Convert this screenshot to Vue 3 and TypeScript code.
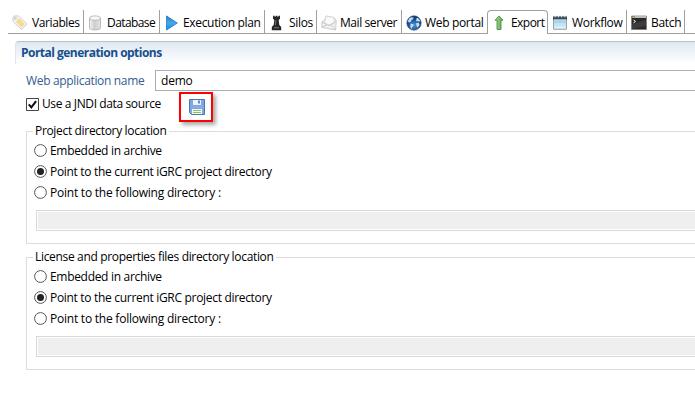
<script setup lang="ts">
import { ref } from 'vue'

interface Tab { id: string; label: string }
interface Group { id: string; title: string; selected: number; path: string }

const tabs: Tab[] = [
  { id: 'variables', label: 'Variables' },
  { id: 'database', label: 'Database' },
  { id: 'execution', label: 'Execution plan' },
  { id: 'silos', label: 'Silos' },
  { id: 'mail', label: 'Mail server' },
  { id: 'web', label: 'Web portal' },
  { id: 'export', label: 'Export' },
  { id: 'workflow', label: 'Workflow' },
  { id: 'batch', label: 'Batch' },
]
const active = ref('export')
const appName = ref('demo')
const useJndi = ref(true)
const options = ['Embedded in archive', 'Point to the current iGRC project directory', 'Point to the following directory :']
const groups = ref<Group[]>([
  { id: 'project', title: 'Project directory location', selected: 1, path: '' },
  { id: 'license', title: 'License and properties files directory location', selected: 1, path: '' },
])
</script>

<template>
  <main class="editor">
    <nav class="tabs">
      <button v-for="t in tabs" :key="t.id" :class="['tab', 'tab-' + t.id, { active: active === t.id }]" @click="active = t.id">
        <svg class="icon" viewBox="0 0 16 16" width="16" height="16">
          <g v-if="t.id === 'variables'">
            <path d="M.8 3 2.2.9 6.4.9 15 9 9.6 14.6 1 6.5Z" fill="#f5f4f0" stroke="#c6c4bf" stroke-width=".8" />
            <path d="M7 3.7 12.4 9.1 9.5 12 4.3 6.9Z" fill="#f6dc91" stroke="#ecd08a" stroke-width=".6" />
            <circle cx="3.3" cy="3.4" r="1" fill="#fff" stroke="#aaa" stroke-width=".7" />
          </g>
          <g v-else-if="t.id === 'database'">
            <path d="M1.5 3.3v9.7c0 2.6 11 2.6 11 0V3.3Z" fill="url(#cyl)" stroke="#b4b4b4" stroke-width=".9" />
            <ellipse cx="7" cy="3.1" rx="5.5" ry="2.2" fill="#f7f7f7" stroke="#b0b0b0" stroke-width=".8" />
          </g>
          <path v-else-if="t.id === 'execution'" d="M2.5 .9 13.3 8 2.5 15.1Z" fill="url(#play)" stroke="#1c78c8" stroke-width=".8" />
          <g v-else-if="t.id === 'silos'">
            <path d="M4 .8h1.6v1h1V.8h1.8v1h1V.8H11v3L9.7 5l.6 5 1.9 2v3.2H2.8V12l1.9-2 .6-5L4 3.8Z" fill="#252525" />
            <path d="M6.9 5.2 6.4 10M5 12.7h5" stroke="#888" stroke-width=".8" />
          </g>
          <g v-else-if="t.id === 'mail'" stroke="#c2c2c2" stroke-width=".8">
            <path d="M3.8 4.6 5.2 1.1 13 2.5 15.3 5.5 14.6 15 .7 12.4 .9 7Z" fill="#f0f0f0" />
            <path d="M5.2 1.1 13 2.5 13.4 8 8.6 10.2 3.4 8Z" fill="#fafafa" stroke="#d2d2d2" />
            <path d="m.9 7.2 7.1 3.4 7.2-4.6M1 12.2 6 9.8M14.4 14.8 10 9.6" fill="none" />
          </g>
          <g v-else-if="t.id === 'web'">
            <circle cx="8" cy="8" r="7.2" fill="url(#globe)" stroke="#234b7d" stroke-width=".6" />
            <path d="M3 3.8 5 2.2l2.6.4L7 4.2l-1.6.8-.4 1.8L3.2 7.4 1.8 6.4ZM4.6 8.4l2.8.9.3 1.3-1.7 1.6-.3 1.8-1.4-1.8ZM10.4 3.3l1.6-.3 2 2.5-.5 1.3-1.8-.6-1.5.1ZM10.2 8l2.6-.2.8 2-2 2.9-1.3-2.1Z" fill="#c4def2" />
          </g>
          <path v-else-if="t.id === 'export'" d="M8 .9 12 5.2H10v9.3H6V5.2H4Z" fill="url(#arrow)" stroke="#4e9145" stroke-width=".9" />
          <g v-else-if="t.id === 'workflow'">
            <path d="M1.5 2h13v12.3h-13Z" fill="#d9edf7" stroke="#98a3aa" />
            <path d="M1 1.5h14v3H1Z" fill="#3f474d" />
            <path d="M3.2.3v2.2M6.4.3v2.2M9.6.3v2.2M12.8.3v2.2" stroke="#dce3e6" />
            <path d="M2 4.5h12v4H2Z" fill="#a6d5ec" />
            <path d="M2 8.5h12v2.5H2Z" fill="#c4e4f3" />
          </g>
          <g v-else>
            <path d="M.5 1h15v13.5H.5Z" fill="#292929" stroke="#777" stroke-width=".7" />
            <path d="M.8 1h14.4v2H.8Z" fill="#bbb" />
            <path d="M1 1.1h1.4v1.5H1Z" fill="#ef4c29" />
            <path d="M2.7 1.1H4v1.5H2.7Z" fill="#57ba35" />
            <path d="m2.5 5 2 1.4-2 1.5" fill="none" stroke="#fff" />
            <path d="m1 9 14-4v6L1 14Z" fill="#494949" opacity=".6" />
          </g>
        </svg>
        <span>{{ t.label }}</span>
      </button>
      <i class="tab-rest"></i>
    </nav>

    <section class="portal">
      <h1>Portal generation options</h1>
      <div class="name-row">
        <label for="app-name">Web application name</label>
        <input id="app-name" v-model="appName" type="text" />
      </div>
      <div class="jndi-row">
        <label class="jndi">
          <input v-model="useJndi" type="checkbox" />
          <svg class="check" viewBox="0 0 13 13" width="13" height="13">
            <path d="M.5.5h12v12H.5Z" fill="#fff" stroke="#444" />
            <path v-if="useJndi" d="m2.8 6.3 2.5 3 4.8-6.2" fill="none" stroke="#111" stroke-width="2" />
          </svg>
          <span>Use a JNDI data source</span>
        </label>
        <button class="save" aria-label="Save">
          <svg viewBox="0 0 16 16" width="16" height="16">
            <path d="M.5.5h15v15h-13l-2-2Z" fill="#7fa6df" stroke="#4676bd" />
            <path d="M4 1h8v5H4Z" fill="#eef3fa" />
            <path d="M9 1.5h2v3H9Z" fill="#5b88c8" />
            <path d="M2 8h12" stroke="#91b6e5" />
            <path d="M3 10h10v5H3Z" fill="#f6faf2" />
            <path d="M4 11.5h8M4 13.5h8" stroke="#86c268" stroke-width="1.2" />
          </svg>
        </button>
      </div>

      <fieldset v-for="g in groups" :key="g.id">
        <legend>{{ g.title }}</legend>
        <label v-for="(o, i) in options" :key="o" :class="['radio', 'radio-' + i]">
          <input v-model="g.selected" type="radio" :name="g.id" :value="i" />
          <svg viewBox="0 0 13 13" width="13" height="13">
            <circle cx="6.5" cy="6.5" r="5.9" fill="#fff" stroke="#555" stroke-width="1" />
            <circle v-if="g.selected === i" cx="6.5" cy="6.5" r="3.5" fill="#222" />
          </svg>
          <span>{{ o }}</span>
        </label>
        <input v-model="g.path" class="path" type="text" :disabled="g.selected !== 2" />
      </fieldset>
    </section>

    <svg class="defs" width="0" height="0">
      <linearGradient id="cyl"><stop stop-color="#f4f4f4" /><stop offset=".45" stop-color="#cdcdcd" /><stop offset="1" stop-color="#e4e4e4" /></linearGradient>
      <linearGradient id="play" x2="0" y2="1"><stop stop-color="#2679c5" /><stop offset=".5" stop-color="#45a9ed" /><stop offset="1" stop-color="#1688df" /></linearGradient>
      <radialGradient id="globe" cy=".65"><stop stop-color="#4695df" /><stop offset="1" stop-color="#153e78" /></radialGradient>
      <linearGradient id="arrow"><stop stop-color="#a8d990" /><stop offset="1" stop-color="#5da653" /></linearGradient>
    </svg>
  </main>
</template>

<style>
body { background: #fff; overflow: hidden; }
</style>

<style scoped>
.editor { width: 695px; height: 407px; padding-top: 10px; box-sizing: border-box; overflow: hidden; font: 12px/16px "Open Sans", "Noto Sans", sans-serif; letter-spacing: -.33px; color: #000; }
.tabs { display: grid; grid-template-columns: 76px 76px 105px 52px 85px 85px 61px 79px 58px 1fr; height: 24px; padding-left: 8px; }
.tab { display: flex; align-items: center; gap: 4px; min-width: 0; margin: 0; padding: 2px 0 0 4px; border: 0; border-right: 1px solid #a0a0a0; border-bottom: 1px solid #a0a0a0; background: #fff; font: inherit; letter-spacing: inherit; color: #000; white-space: nowrap; }
.tab-web { border-right: 0; }
.tab-database, .tab-execution, .tab-mail, .tab-web { gap: 3px; }
.tab-variables { letter-spacing: -.4px; }
.tab-database { letter-spacing: -.58px; }
.tab-mail { letter-spacing: -.42px; }
.tab-export { letter-spacing: -.55px; }
.tab.active { padding: 0 0 0 3px; border: 1px solid #a0a0a0; border-bottom: 0; border-radius: 4px 4px 0 0; }
.tab-rest { border-bottom: 1px solid #a0a0a0; }
.icon { flex: none; }
.portal { padding: 7px 0 0 15px; }
h1 { margin: 0; height: 21px; padding: 1px 0 0 5px; border-top: 1px solid #b5c3d5; border-left: 1px solid #dce5ef; border-radius: 4px 0 0 0; background: linear-gradient(#dfe8f1, #fff); font: bold 12px/20px "Open Sans", sans-serif; letter-spacing: -.52px; color: #174f8d; }
.name-row { display: flex; margin-top: 6px; padding-left: 11px; height: 21px; }
.name-row label { width: 129px; line-height: 22px; color: #315d91; white-space: nowrap; }
.name-row input { flex: 1; min-width: 0; box-sizing: border-box; height: 21px; padding: 0 5px 0; border: 1px solid #abadb3; border-right: 0; font: inherit; letter-spacing: -.2px; color: #000; outline: 0; }
.jndi-row { display: flex; height: 32px; padding-left: 11px; }
.jndi { display: flex; align-items: center; gap: 3px; width: 153px; height: 26px; letter-spacing: -.38px; white-space: nowrap; }
.jndi input, .radio input { position: absolute; opacity: 0; margin: 0; }
.save { display: flex; align-items: center; justify-content: center; box-sizing: border-box; width: 34px; height: 30px; margin: 1px 0 0; padding: 0 0 0 2px; border: 2px solid #f00; background: #fff; box-shadow: 3px 3px 4px #0005; }
fieldset { display: flow-root; box-sizing: border-box; height: 121px; margin: 0 0 5px 11px; padding: 0 0 0 7px; border: 1px solid #dcdcdc; border-right: 0; min-width: 0; }
legend { height: 16px; margin-left: -1px; padding: 0 2px; white-space: nowrap; }
.radio { display: flex; align-items: center; gap: 3px; height: 21px; letter-spacing: -.31px; white-space: nowrap; }
.radio-0 { margin-top: 1px; }
.radio-2 { letter-spacing: -.23px; }
.path { display: block; width: calc(100% - 2px); box-sizing: border-box; height: 21px; margin: 7px 0 0 2px; padding: 0; border: 1px solid #d9d9d9; border-right: 0; background: #efefef; box-shadow: inset 1px 1px #fff, inset 0 -1px #fff; }
.defs { position: absolute; }
</style>
